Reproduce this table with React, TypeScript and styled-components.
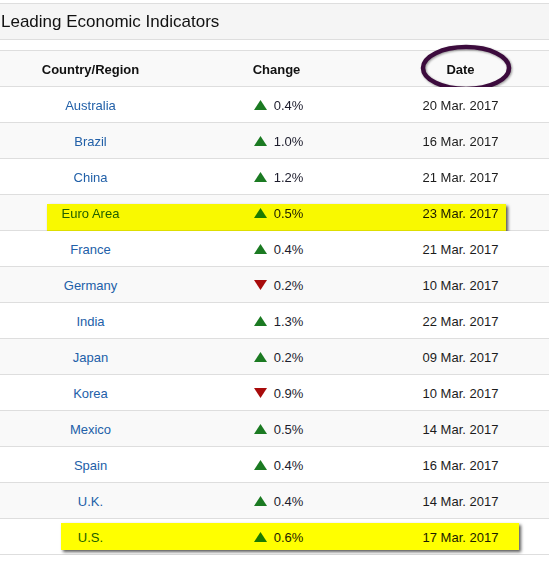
import styled, { createGlobalStyle } from 'styled-components';

const GlobalStyle = createGlobalStyle`
  html, body {
    margin: 0;
    padding: 0;
    background: #fff;
    font-family: "Liberation Sans", Arial, sans-serif;
  }
`;

type Indicator = {
  country: string;
  change: string;
  up: boolean;
  date: string;
  mark?: { left: number; width: number; top: number };
};

const indicators: Indicator[] = [
  { country: 'Australia', change: '0.4%', up: true, date: '20 Mar. 2017' },
  { country: 'Brazil', change: '1.0%', up: true, date: '16 Mar. 2017' },
  { country: 'China', change: '1.2%', up: true, date: '21 Mar. 2017' },
  { country: 'Euro Area', change: '0.5%', up: true, date: '23 Mar. 2017', mark: { left: 47, width: 459, top: 9 } },
  { country: 'France', change: '0.4%', up: true, date: '21 Mar. 2017' },
  { country: 'Germany', change: '0.2%', up: false, date: '10 Mar. 2017' },
  { country: 'India', change: '1.3%', up: true, date: '22 Mar. 2017' },
  { country: 'Japan', change: '0.2%', up: true, date: '09 Mar. 2017' },
  { country: 'Korea', change: '0.9%', up: false, date: '10 Mar. 2017' },
  { country: 'Mexico', change: '0.5%', up: true, date: '14 Mar. 2017' },
  { country: 'Spain', change: '0.4%', up: true, date: '16 Mar. 2017' },
  { country: 'U.K.', change: '0.4%', up: true, date: '14 Mar. 2017' },
  { country: 'U.S.', change: '0.6%', up: true, date: '17 Mar. 2017', mark: { left: 61, width: 458, top: 4 } },
];

const Page = styled.div`
  width: 549px;
  padding-top: 3px;
`;

const TitleBar = styled.div`
  height: 35px;
  display: flex;
  align-items: center;
  padding-left: 1px;
  background: #f5f5f5;
  border-top: 1px solid #dedede;
  border-bottom: 1px solid #dedede;
  font-size: 17px;
  color: #111;
`;

const Table = styled.div`
  margin-top: 10px;
  border-top: 1px solid #dedede;
`;

const Row = styled.div<{ $shade?: boolean }>`
  position: relative;
  display: grid;
  grid-template-columns: 181px 191px 1fr;
  height: 35px;
  align-items: center;
  border-bottom: 1px solid #dedede;
  background: ${(p) => (p.$shade ? '#f9f9f9' : '#fff')};
  font-size: 13px;
  padding-top: 1px;
  box-sizing: border-box;
  height: 36px;
`;

const HeadCell = styled.div`
  text-align: center;
  font-weight: bold;
  color: #111;
`;

const CountryCell = styled.div`
  text-align: center;
  color: #2260a8;
`;

const ChangeCell = styled.div`
  display: flex;
  justify-content: center;
  align-items: center;
  gap: 7px;
  padding-left: 4px;
  color: #1c1c2c;
`;

const DateCell = styled.div`
  text-align: center;
  color: #1c1c1c;
`;

const Marker = styled.div`
  position: absolute;
  height: 27px;
  background: #ffff00;
  mix-blend-mode: multiply;
  box-shadow: 2px 2px 3px rgba(0, 0, 0, 0.65);
  pointer-events: none;
`;

const Ring = styled.svg`
  position: absolute;
  left: 420px;
  top: -6px;
  overflow: visible;
  filter: drop-shadow(1px 1px 1px rgba(0, 0, 0, 0.4));
`;

function Arrow({ up }: { up: boolean }) {
  return (
    <svg width="13" height="10" viewBox="0 0 13 10">
      {up ? (
        <polygon points="6.5,0 13,10 0,10" fill="#1b7a22" />
      ) : (
        <polygon points="0,0 13,0 6.5,10" fill="#a80b0b" />
      )}
    </svg>
  );
}

export default function App() {
  return (
    <Page>
      <GlobalStyle />
      <TitleBar>Leading Economic Indicators</TitleBar>
      <Table>
        <Row $shade>
          <HeadCell>Country/Region</HeadCell>
          <HeadCell>Change</HeadCell>
          <HeadCell>Date</HeadCell>
          <Ring width="92" height="46" viewBox="0 0 92 46">
            <ellipse cx="46" cy="23" rx="43" ry="21" fill="none" stroke="#3c0b3d" strokeWidth="4.5" />
          </Ring>
        </Row>
        {indicators.map((item, idx) => (
          <Row key={item.country} $shade={idx % 2 === 1}>
            <CountryCell>{item.country}</CountryCell>
            <ChangeCell>
              <Arrow up={item.up} />
              <span>{item.change}</span>
            </ChangeCell>
            <DateCell>{item.date}</DateCell>
            {item.mark && (
              <Marker style={{ left: item.mark.left, width: item.mark.width, top: item.mark.top }} />
            )}
          </Row>
        ))}
      </Table>
    </Page>
  );
}
